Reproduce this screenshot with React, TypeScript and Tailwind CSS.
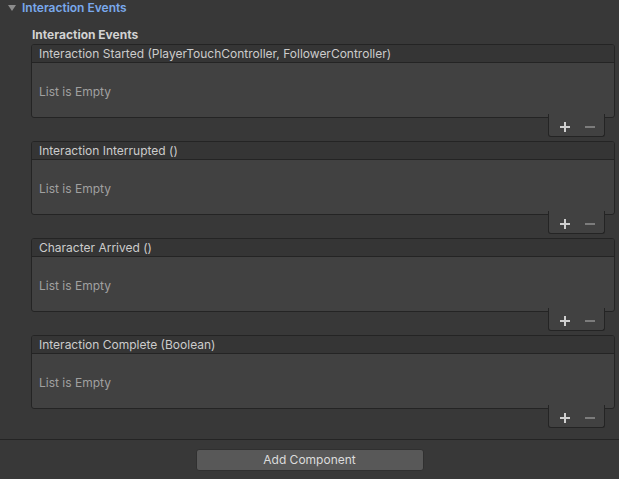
import React from "react";

const events = [
  "Interaction Started (PlayerTouchController, FollowerController)",
  "Interaction Interrupted ()",
  "Character Arrived ()",
  "Interaction Complete (Boolean)",
];

function EventPanel({ title }: { title: string }) {
  return (
    <div className="flex flex-col">
      <div className="rounded-[3px] border border-[#242424] bg-[#414141] overflow-hidden">
        <div className="h-[18px] flex items-center pl-[7px] bg-[#353535] border-b border-[#242424] text-[12px] text-[#cccccc] leading-none">
          {title}
        </div>
        <div className="h-[54px] flex items-center pl-[7px] pt-[3px] text-[12px] text-[#a0a0a0] leading-none">
          List is Empty
        </div>
      </div>
      <div className="flex justify-end pr-[10px]">
        <div className="relative -mt-[4px] w-[57px] h-[23px] bg-[#414141] border border-t-0 border-[#242424] rounded-b-[3px]">
          <svg className="absolute left-[11px] top-[8px]" width="10" height="10" viewBox="0 0 10 10">
            <rect x="4" y="0" width="2" height="10" fill="#cfcfcf" />
            <rect x="0" y="4" width="10" height="2" fill="#cfcfcf" />
          </svg>
          <svg className="absolute left-[36px] top-[8px]" width="10" height="10" viewBox="0 0 10 10">
            <rect x="0" y="4" width="10" height="2" fill="#7c7c7c" />
          </svg>
        </div>
      </div>
    </div>
  );
}

export default function App() {
  return (
    <div
      className="w-[619px] h-[479px] bg-[#383838] overflow-hidden flex flex-col"
      style={{ fontFamily: "Inter, 'Noto Sans', sans-serif" }}
    >
      <div className="h-[15px] flex items-center pl-[8px] gap-[6px]">
        <svg width="8" height="8" viewBox="0 0 8 8">
          <polygon points="0,1 8,1 4,7" fill="#8c8c8c" />
        </svg>
        <span className="text-[12px] font-semibold text-[#7aa9ec] leading-none">Interaction Events</span>
      </div>
      <div className="pl-[31px] pr-[4px] flex flex-col">
        <div className="h-[29px] flex items-end pb-[3px] pl-[1px] text-[12px] font-bold text-[#d2d2d2] leading-none">
          Interaction Events
        </div>
        <div className="flex flex-col gap-[4px]">
          {events.map((e) => (
            <EventPanel key={e} title={e} />
          ))}
        </div>
      </div>
      <div className="mt-[11px] h-[1px] bg-[#242424]" />
      <div className="flex justify-center pt-[9px]">
        <button className="w-[228px] h-[22px] rounded-[3px] bg-[#585858] border border-[#303030] text-[12px] text-[#dcdcdc] leading-none">
          Add Component
        </button>
      </div>
    </div>
  );
}
